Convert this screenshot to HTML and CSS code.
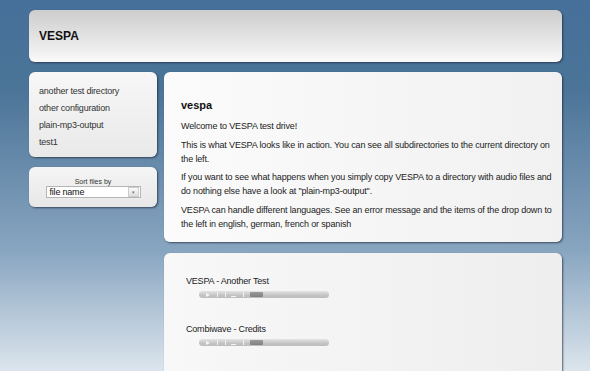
FILE: index.html
```html
<!DOCTYPE html>
<html lang="en">
<head>
    <meta charset="UTF-8">
    <title>VESPA</title>
    <link rel="stylesheet" href="styles.css">
</head>
<body>

    <div class="page">
        <div class="box header">
            <h1>VESPA</h1>
        </div>

        <div class="columns">
            <div class="side">
                <div class="box dirs">
                    <ul class="dir-list">
                        <li>another test directory</li>
                        <li>other configuration</li>
                        <li>plain-mp3-output</li>
                        <li>test1</li>
                    </ul>
                </div>
                <div class="box sort">
                    <div class="sort-label">Sort files by</div>
                    <div class="select">
                        <span>file name</span>
                        <span class="select-btn">&#9662;</span>
                    </div>
                </div>
            </div>

            <div class="main">
                <div class="box intro">
                    <h2>vespa</h2>
                    <p>Welcome to VESPA test drive!</p>
                    <p>This is what VESPA looks like in action. You can see all subdirectories to the current directory on the left.</p>
                    <p>If you want to see what happens when you simply copy VESPA to a directory with audio files and do nothing else have a look at "plain-mp3-output".</p>
                    <p>VESPA can handle different languages. See an error message and the items of the drop down to the left in english, german, french or spanish</p>
                </div>

                <div class="box tracks">
                    <div class="track">
                        <div class="track-title">VESPA - Another Test</div>
                        <div class="player">
                            <span class="play"></span>
                            <span class="sep"></span>
                            <span class="sep"></span>
                            <span class="vol"></span>
                            <span class="sep"></span>
                            <span class="thumb"></span>
                        </div>
                    </div>
                    <div class="track">
                        <div class="track-title">Combiwave - Credits</div>
                        <div class="player">
                            <span class="play"></span>
                            <span class="sep"></span>
                            <span class="sep"></span>
                            <span class="vol"></span>
                            <span class="sep"></span>
                            <span class="thumb"></span>
                        </div>
                    </div>
                </div>
            </div>
        </div>
    </div>

</body>
</html>
```

FILE: styles.css
```css
html, body {
    margin: 0;
    height: 371px;
    overflow: hidden;
}
body {
    font-family: "Liberation Sans", Arial, sans-serif;
    color: #222;
    letter-spacing: -0.2px;
    background: linear-gradient(#46709a 0px, #4b7498 90px, #88a5c0 250px, #dce5ed 371px);
}
.page {
    width: 533px;
    padding: 10px 0 0 29px;
}
.box {
    border-radius: 6px;
    box-shadow: 1px 1px 2px rgba(30, 40, 55, 0.7);
}
.header {
    height: 52px;
    display: flex;
    align-items: center;
    padding-left: 10px;
    background: linear-gradient(#cdcdcd, #ededed 75%, #fafafa);
}
h1 {
    margin: 0;
    font-size: 12px;
    font-weight: bold;
    letter-spacing: 0;
    color: #111;
}
.columns {
    display: flex;
    gap: 7px;
    margin-top: 10px;
}
.side {
    width: 128px;
}
.main {
    width: 398px;
}
.dirs {
    height: 85px;
    background: linear-gradient(#f7f7f7, #e9e9e9);
}
.dir-list {
    list-style: none;
    margin: 0;
    padding: 14px 0 0 10px;
    font-size: 9px;
    color: #333;
}
.dir-list li {
    height: 17px;
}
.sort {
    height: 40px;
    margin-top: 10px;
    background: linear-gradient(#f5f5f5, #e7e7e7);
    display: flex;
    flex-direction: column;
    align-items: center;
    padding-top: 11px;
    box-sizing: border-box;
}
.sort-label {
    font-size: 7px;
    color: #333;
    line-height: 8px;
    letter-spacing: 0;
}
.select {
    width: 95px;
    height: 12px;
    box-sizing: border-box;
    background: #fff;
    border: 1px solid #b5b5b5;
    display: flex;
    justify-content: space-between;
    align-items: center;
    font-size: 9px;
    color: #111;
    padding-left: 3px;
}
.select-btn {
    width: 9px;
    height: 8px;
    margin-right: 1px;
    border: 1px solid #ccc;
    background: linear-gradient(#fafafa, #dedede);
    font-size: 5px;
    color: #777;
    text-align: center;
    line-height: 8px;
}
.intro {
    height: 170px;
    box-sizing: border-box;
    padding: 26px 8px 0 17px;
    background: linear-gradient(90deg, #fbfbfb, #f1f1f1);
    font-size: 9px;
    letter-spacing: -0.15px;
    line-height: 14px;
}
h2 {
    margin: 0 0 7px;
    font-size: 11px;
    letter-spacing: 0;
    color: #111;
}
.intro p {
    margin: 0 0 4.5px;
}
.tracks {
    height: 140px;
    margin-top: 11px;
    box-sizing: border-box;
    padding: 22px 0 0 22px;
    background: linear-gradient(90deg, #f8f8f8, #eeeeee);
    font-size: 9px;
}
.track {
    height: 48px;
}
.track-title {
    color: #222;
    line-height: 12px;
}
.player {
    width: 130px;
    height: 7px;
    margin: 4px 0 0 13px;
    border-radius: 4px;
    background: linear-gradient(#e4e4e4, #c4c4c4 60%, #bdbdbd);
    display: flex;
    align-items: center;
}
.play {
    width: 0;
    height: 0;
    margin-left: 7px;
    border-left: 4px solid #f5f5f5;
    border-top: 2px solid transparent;
    border-bottom: 2px solid transparent;
}
.sep {
    width: 1px;
    height: 5px;
    margin-left: 7px;
    background: #f2f2f2;
}
.vol {
    width: 5px;
    height: 1px;
    margin: 3px 0 0 5px;
    background: #f5f5f5;
}
.thumb {
    width: 13px;
    height: 5px;
    margin-left: 6px;
    border-radius: 1px;
    background: linear-gradient(#9a9a9a, #7f7f7f);
}
```
